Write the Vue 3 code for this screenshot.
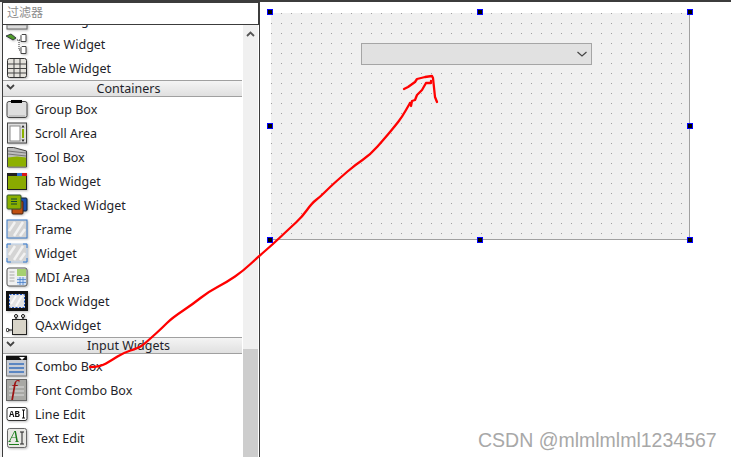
<script setup>
const rows = [
  { label: 'List Widget', icon: 'list' },
  { label: 'Tree Widget', icon: 'tree' },
  { label: 'Table Widget', icon: 'table' },
  { header: 'Containers' },
  { label: 'Group Box', icon: 'group' },
  { label: 'Scroll Area', icon: 'scroll' },
  { label: 'Tool Box', icon: 'toolbox' },
  { label: 'Tab Widget', icon: 'tab' },
  { label: 'Stacked Widget', icon: 'stacked' },
  { label: 'Frame', icon: 'frame' },
  { label: 'Widget', icon: 'widget' },
  { label: 'MDI Area', icon: 'mdi' },
  { label: 'Dock Widget', icon: 'dock' },
  { label: 'QAxWidget', icon: 'qax' },
  { header: 'Input Widgets' },
  { label: 'Combo Box', icon: 'combo' },
  { label: 'Font Combo Box', icon: 'font' },
  { label: 'Line Edit', icon: 'line' },
  { label: 'Text Edit', icon: 'text' }
]

const handles = [
  { x: 270, y: 12 }, { x: 480, y: 12 }, { x: 690, y: 12 },
  { x: 270, y: 126 }, { x: 690, y: 126 },
  { x: 270, y: 240 }, { x: 480, y: 240 }, { x: 690, y: 240 }
]

// hand-drawn arrow, traced from the picture
const curve = [
  [90, 367], [100, 367], [112, 360], [123, 353], [138, 348], [143, 345], [151, 338], [162, 328],
  [172, 318], [193, 304], [208, 292], [227, 282], [243, 271], [258, 257], [272, 245], [290, 228],
  [302, 217], [312, 203], [320, 197], [330, 187], [340, 178], [355, 165], [370, 155], [385, 138],
  [395, 126], [402, 117], [410, 103]
]

function smooth(points) {
  let d = `M${points[0][0]} ${points[0][1]}`
  for (let i = 1; i < points.length - 1; i++) {
    const mx = (points[i][0] + points[i + 1][0]) / 2
    const my = (points[i][1] + points[i + 1][1]) / 2
    d += ` Q${points[i][0]} ${points[i][1]} ${mx} ${my}`
  }
  const last = points[points.length - 1]
  return `${d} L${last[0]} ${last[1]}`
}

const stroke = smooth(curve)
const jag = 'M410 103 L411 106 L412 101 L415 100 L417 95 L422 90 L426 83 L431 83 L431 81'
const hook = 'M404 89 L408 87 L415 82 L417 79 L425 77 L432 76 L433 78 L435 97 L437 102'
</script>

<template>
  <div class="screen">
    <aside class="box">
      <div class="filter">过滤器</div>
      <div class="body">
        <div class="viewport">
          <ul class="list">
            <template v-for="row in rows" :key="row.label || row.header">
              <li v-if="row.header" class="head">
                <svg class="head-arrow" width="9" height="6" viewBox="0 0 9 6"><path d="M1 1l3.500 3.500L8 1" fill="none" stroke="#444" stroke-width="1.800" /></svg>
                {{ row.header }}
              </li>
              <li v-else class="item">
                <svg class="icon" width="22" height="22" viewBox="0 0 22 22">
                  <g v-if="row.icon === 'list'">
                    <rect x="1" y="2" width="20" height="18" fill="#dcdcdc" stroke="#666" />
                    <path d="M2 12h18M2 16h18" stroke="#999" />
                  </g>
                  <g v-else-if="row.icon === 'tree'">
                    <path d="M0 3l5-2 5 4-3 2z" fill="#4f9a2a" stroke="#223" stroke-width=".8" />
                    <path d="M11 7h4M13 7v10h2" stroke="#333" stroke-dasharray="1 1" fill="none" />
                    <path d="M16 1.500h4v7h-5v-6zM16 13.500h4v7h-5v-6z" fill="#fff" stroke="#444" />
                  </g>
                  <g v-else-if="row.icon === 'table'">
                    <rect x="1.500" y="1.500" width="19" height="19" rx="2" fill="#e4e2dc" stroke="#333" />
                    <path d="M2 7h18M2 11.500h18M2 16h18M8 2v18M14 2v18" stroke="#444" />
                  </g>
                  <g v-else-if="row.icon === 'group'">
                    <rect x="1" y="3.500" width="20" height="16" rx="2" fill="#dedede" stroke="#444" />
                    <rect x="5" y="2" width="11" height="3" fill="#000" />
                    <path d="M3 18h16" stroke="#aaa" />
                  </g>
                  <g v-else-if="row.icon === 'scroll'">
                    <rect x="1.500" y="1" width="19" height="20" fill="#ddd" stroke="#444" />
                    <rect x="4" y="4" width="10" height="15" fill="#fff" stroke="#888" />
                    <rect x="16" y="7" width="2" height="9" fill="#8ab000" />
                    <path d="M15.500 5.500h3L17 3zM15.500 17.500h3L17 20z" fill="#222" />
                  </g>
                  <g v-else-if="row.icon === 'toolbox'">
                    <path d="M1.500 1.500h6l13 3.500v16h-19z" fill="#bdbdbd" stroke="#444" />
                    <path d="M2 5l9 1 9 1M2 8l9 1 9 1" stroke="#777" fill="none" />
                    <path d="M2 11.500l9-1 9 1V20.500H2z" fill="#8db000" />
                  </g>
                  <g v-else-if="row.icon === 'tab'">
                    <rect x="1.500" y="4.500" width="19" height="15" fill="#8aaa00" stroke="#222" />
                    <rect x="1" y="3" width="10" height="3" fill="#222" />
                    <rect x="11" y="3" width="5" height="3" fill="#2a6fd0" />
                    <rect x="16" y="3" width="5" height="3" fill="#d81818" />
                  </g>
                  <g v-else-if="row.icon === 'stacked'">
                    <rect x="13" y="4" width="8" height="13" rx="1" fill="#1c50b0" stroke="#123" />
                    <rect x="6" y="7" width="11" height="13" rx="1" fill="#c04f10" stroke="#421" />
                    <rect x="1" y="1" width="14" height="14" rx="1" fill="#8ab000" stroke="#353" />
                    <path d="M5 5h6M5 7.500h6M5 10h6" stroke="#143" />
                  </g>
                  <g v-else-if="row.icon === 'frame'">
                    <rect x="1" y="2" width="20" height="18" fill="#d4d4d4" stroke="#3a7ac8" />
                    <path d="M3 13l6-9M8 18l9-14M14 18l5-7" stroke="#f2f2f2" stroke-width="2.500" />
                  </g>
                  <g v-else-if="row.icon === 'widget'">
                    <rect x="1" y="2" width="20" height="18" fill="#d4d4d4" stroke="#bcd2ec" />
                    <path d="M1 6V2H5M17 2h4V6M1 16v4H5M17 20h4V16" fill="none" stroke="#3a7ac8" />
                    <path d="M3 13l6-9M8 18l9-14M14 18l5-7" stroke="#f2f2f2" stroke-width="2.500" />
                  </g>
                  <g v-else-if="row.icon === 'mdi'">
                    <rect x="1" y="2" width="20" height="18" rx="2" fill="#f0f0f0" stroke="#555" />
                    <rect x="11" y="3" width="9" height="7" fill="#a5d070" />
                    <rect x="11" y="11" width="9" height="8" fill="#cfe0f5" />
                    <path d="M11 13.500h9M11 16.500h9M14 11v8M17 11v8" stroke="#4a7fc8" stroke-width=".8" />
                    <path d="M3.500 6h5M3.500 9h5M3.500 12h5M3.500 15h5" stroke="#aaa" />
                  </g>
                  <g v-else-if="row.icon === 'dock'">
                    <rect x="0" y="1" width="22" height="20" fill="#111" />
                    <rect x="3" y="4" width="16" height="14" fill="#e2e2e2" />
                    <path d="M5 14l5-8M10 16l6-10" stroke="#f8f8f8" stroke-width="2" />
                    <rect x="3.500" y="4.500" width="15" height="13" fill="none" stroke="#1f55c0" stroke-dasharray="2 1.500" />
                  </g>
                  <g v-else-if="row.icon === 'qax'">
                    <path d="M10 5V2M17 5V2M1 16h6" stroke="#111" stroke-width="1.200" />
                    <circle cx="10" cy="2" r="1.500" fill="#fff" stroke="#111" />
                    <circle cx="17" cy="2" r="1.500" fill="#fff" stroke="#111" />
                    <circle cx="1.500" cy="16" r="1.500" fill="#fff" stroke="#111" />
                    <rect x="6.500" y="5.500" width="14" height="15" fill="#d8d4c8" stroke="#222" />
                  </g>
                  <g v-else-if="row.icon === 'combo'">
                    <rect x="0.500" y="1" width="20" height="20" fill="#c8ccd4" stroke="#777" />
                    <rect x="0" y="1" width="21" height="4" fill="#111" />
                    <path d="M13 2h6l-3 3z" fill="#fff" />
                    <path d="M3 9h15M3 13h15M3 17h15" stroke="#5b86c2" stroke-width="2" />
                  </g>
                  <g v-else-if="row.icon === 'font'">
                    <rect x="0.500" y="0.500" width="20" height="21" fill="#a8a8a4" stroke="#666" />
                    <path d="M3 8h15M3 12h15M3 16h15" stroke="#c2c2c0" stroke-width="2" />
                    <text x="5" y="16" class="glyph-f">f</text>
                  </g>
                  <g v-else-if="row.icon === 'line'">
                    <rect x="1" y="4.500" width="20" height="13" rx="2" fill="#fff" stroke="#333" />
                    <text x="3" y="14" class="glyph-ab">AB</text>
                    <path d="M16 7h3M17.500 7v8M16 15h3" stroke="#111" fill="none" />
                  </g>
                  <g v-else-if="row.icon === 'text'">
                    <rect x="1.500" y="1.500" width="19" height="19" rx="2" fill="#e8e8e4" stroke="#666" />
                    <text x="3" y="15" class="glyph-a">A</text>
                    <path d="M3 17.500h10" stroke="#1a7a1a" />
                    <path d="M14 5h4M16 5v12M14 17h4" stroke="#222" fill="none" />
                  </g>
                </svg>
                <span class="name">{{ row.label }}</span>
              </li>
            </template>
          </ul>
        </div>
        <div class="scrollbar">
          <svg class="up" width="9" height="6" viewBox="0 0 9 6"><path d="M1 5l3.500-3.500L8 5" fill="none" stroke="#555" stroke-width="1.800" /></svg>
          <div class="thumb"></div>
        </div>
      </div>
    </aside>

    <main class="canvas">
      <div class="form">
        <div class="combo">
          <svg width="10" height="6" viewBox="0 0 10 6"><path d="M.5 1l4.500 4 4.500-4" fill="none" stroke="#444" stroke-width="1.200" /></svg>
        </div>
      </div>
    </main>

    <span
      v-for="h in handles"
      :key="`${h.x}-${h.y}`"
      class="handle"
      :style="{ left: h.x - 3 + 'px', top: h.y - 3 + 'px' }"
    ></span>

    <svg class="ink" width="731" height="457" viewBox="0 0 731 457">
      <path :d="stroke" />
      <path :d="jag" />
      <path :d="hook" />
    </svg>

    <div class="mark">CSDN @mlmlmlml1234567</div>
  </div>
</template>

<style>
html, body {
  margin: 0;
  background: #fff;
}
</style>

<style scoped>
.screen {
  position: relative;
  display: flex;
  width: 731px;
  height: 457px;
  overflow: hidden;
  box-sizing: border-box;
  border-top: 2px solid #3c3c3c;
  background: #fff;
  font-family: "Noto Sans", "Noto Sans CJK SC", sans-serif;
}

.box {
  display: flex;
  flex-direction: column;
  flex: none;
  width: 260px;
  box-sizing: border-box;
  padding-left: 2px;
  background: linear-gradient(90deg, #f0f0f0 2px, transparent 2px);
}

.filter {
  flex: none;
  height: 23px;
  box-sizing: border-box;
  padding-left: 4px;
  border-left: 1px solid #3c3c3c;
  border-top: 1px solid #3c3c3c;
  border-right: 2px solid #3c3c3c;
  border-bottom: 1px solid #3c3c3c;
  color: #8c8c8c;
  font-size: 12px;
  line-height: 20px;
}

.body {
  display: flex;
  flex: 1;
  min-height: 0;
  border-left: 1px solid #3c3c3c;
  border-right: 1px solid #3c3c3c;
}

.viewport {
  flex: 1;
  min-width: 0;
  overflow: hidden;
  background: #fff;
}

.list {
  margin: -17px 0 0;
  padding: 0;
  list-style: none;
}

.item {
  display: flex;
  align-items: center;
  height: 24px;
  padding-left: 3px;
}

.icon {
  flex: none;
  display: block;
  filter: drop-shadow(1px 1px 1px rgba(0, 0, 0, .25));
}

.name {
  margin-left: 7px;
  color: #1f1f2a;
  font-size: 12.5px;
}

.head {
  position: relative;
  height: 17px;
  margin-right: 1px;
  padding-left: 12px;
  box-sizing: border-box;
  border-top: 1px solid #a0a0a0;
  border-bottom: 1px solid #a0a0a0;
  background: linear-gradient(#f4f4f4, #e0e0e0);
  color: #1f1f2a;
  font-size: 12.5px;
  line-height: 15px;
  text-align: center;
}

.head-arrow {
  position: absolute;
  left: 3px;
  top: 3px;
}

.scrollbar {
  display: flex;
  flex-direction: column;
  flex: none;
  width: 15px;
  margin-right: 1px;
  background: #f0f0f0;
}

.up {
  align-self: center;
  flex: none;
  margin-top: 6px;
}

.thumb {
  flex: none;
  height: 108px;
  margin-top: auto;
  background: #cdcdcd;
}

.canvas {
  flex: 1;
  padding: 11px 0 0 11px;
}

.form {
  width: 419px;
  height: 227px;
  box-sizing: border-box;
  padding: 30px 0 0 90px;
  border-right: 1px solid #a0a0a0;
  border-bottom: 1px solid #a0a0a0;
  background-color: #f0f0f0;
  background-image: conic-gradient(at 1px 1px, transparent 75%, #a0a0a0 0);
  background-size: 10px 10px;
  background-clip: padding-box;
}

.combo {
  display: flex;
  align-items: center;
  justify-content: flex-end;
  width: 231px;
  height: 22px;
  box-sizing: border-box;
  padding-right: 4px;
  border: 1px solid #a5a5a5;
  background: #e1e1e1;
}

.handle {
  position: absolute;
  width: 6px;
  height: 6px;
  box-sizing: border-box;
  margin-top: -2px;
  border: 1px solid #0000ff;
  background: #000;
}

.ink {
  position: absolute;
  left: 0;
  top: -2px;
  pointer-events: none;
}

.ink path {
  fill: none;
  stroke: #f00;
  stroke-width: 2.3;
  stroke-linejoin: round;
  stroke-linecap: round;
}

.mark {
  position: absolute;
  left: 478px;
  top: 427px;
  color: #a8a8a8;
  font-family: "Liberation Sans", Arial, sans-serif;
  font-size: 19.5px;
  line-height: 22px;
  white-space: nowrap;
}

.glyph-f {
  fill: #9c1212;
  font-family: "Liberation Serif", serif;
  font-style: italic;
  font-size: 22px;
}

.glyph-ab {
  fill: #111;
  font-family: "Liberation Mono", monospace;
  font-weight: 700;
  font-size: 9px;
}

.glyph-a {
  fill: #1a7a1a;
  font-family: "Liberation Serif", serif;
  font-style: italic;
  font-size: 16px;
}
</style>
